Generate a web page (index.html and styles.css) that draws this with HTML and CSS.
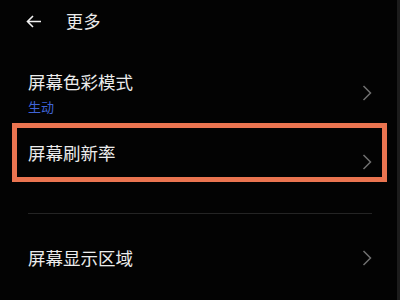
FILE: index.html
```html
<!DOCTYPE html>
<html lang="zh-CN">
  <head>
    <meta charset="UTF-8" />
    <meta name="viewport" content="width=device-width, initial-scale=1.0" />
    <title>更多</title>
    <link rel="stylesheet" href="styles.css">
  </head>

  <body>
    <div class="screen">
      <div class="header">
        <svg class="back" width="16" height="13" viewBox="0 0 16 13">
          <path d="M15 6.5H1.5M7 1L1.5 6.5L7 12" fill="none" stroke="#f0f0f0" stroke-width="1.6" />
        </svg>
        <span class="title">更多</span>
      </div>

      <div class="list">
        <div class="item item-color">
          <div class="item-text">
            <div class="item-title">屏幕色彩模式</div>
            <div class="item-sub">生动</div>
          </div>
          <svg class="chevron" width="10" height="16" viewBox="0 0 10 16">
            <path d="M1.5 1L8.5 8L1.5 15" fill="none" stroke="#6f6f6f" stroke-width="1.5" />
          </svg>
        </div>

        <div class="item item-refresh highlight">
          <div class="item-text">
            <div class="item-title">屏幕刷新率</div>
          </div>
          <svg class="chevron chevron-low" width="10" height="16" viewBox="0 0 10 16">
            <path d="M1.5 1L8.5 8L1.5 15" fill="none" stroke="#6f6f6f" stroke-width="1.5" />
          </svg>
        </div>

        <div class="divider"></div>

        <div class="item item-area">
          <div class="item-text">
            <div class="item-title">屏幕显示区域</div>
          </div>
          <svg class="chevron" width="10" height="16" viewBox="0 0 10 16">
            <path d="M1.5 1L8.5 8L1.5 15" fill="none" stroke="#6f6f6f" stroke-width="1.5" />
          </svg>
        </div>
      </div>
    </div>
  </body>
</html>
```

FILE: styles.css
```css
html,
body {
  margin: 0;
  padding: 0;
  background-color: #030303;
  color: #ececec;
  font-family: "Noto Sans CJK SC", "Noto Sans", sans-serif;
}

.screen {
  width: 400px;
  height: 300px;
  overflow: hidden;
  box-shadow: inset -3px 0 0 #1c1c1c;
}

.header {
  height: 42px;
  display: flex;
  align-items: center;
  padding-left: 26px;
}

.back {
  display: block;
}

.title {
  margin-left: 24px;
  font-size: 17px;
  line-height: 24px;
  letter-spacing: 0.5px;
}

.list {
  margin: 0 13px 0 12px;
  padding-top: 20px;
}

.item {
  display: flex;
  align-items: center;
  justify-content: space-between;
  padding: 0 15px 0 16px;
  box-sizing: border-box;
}

.item-title {
  font-size: 17.5px;
  line-height: 24px;
}

.item-sub {
  margin-top: 4px;
  font-size: 13px;
  line-height: 18px;
  color: #3f63d6;
}

.item-color {
  height: 61px;
}

.item-refresh {
  height: 59px;
}

.highlight {
  outline: 5px solid #ea7450;
  outline-offset: -5px;
}

.chevron {
  display: block;
  flex-shrink: 0;
}

.chevron-low {
  margin-top: 19px;
}

.divider {
  height: 1px;
  margin: 31px 15px 0 16px;
  background-color: #242424;
}

.item-area {
  height: 88px;
}
```
